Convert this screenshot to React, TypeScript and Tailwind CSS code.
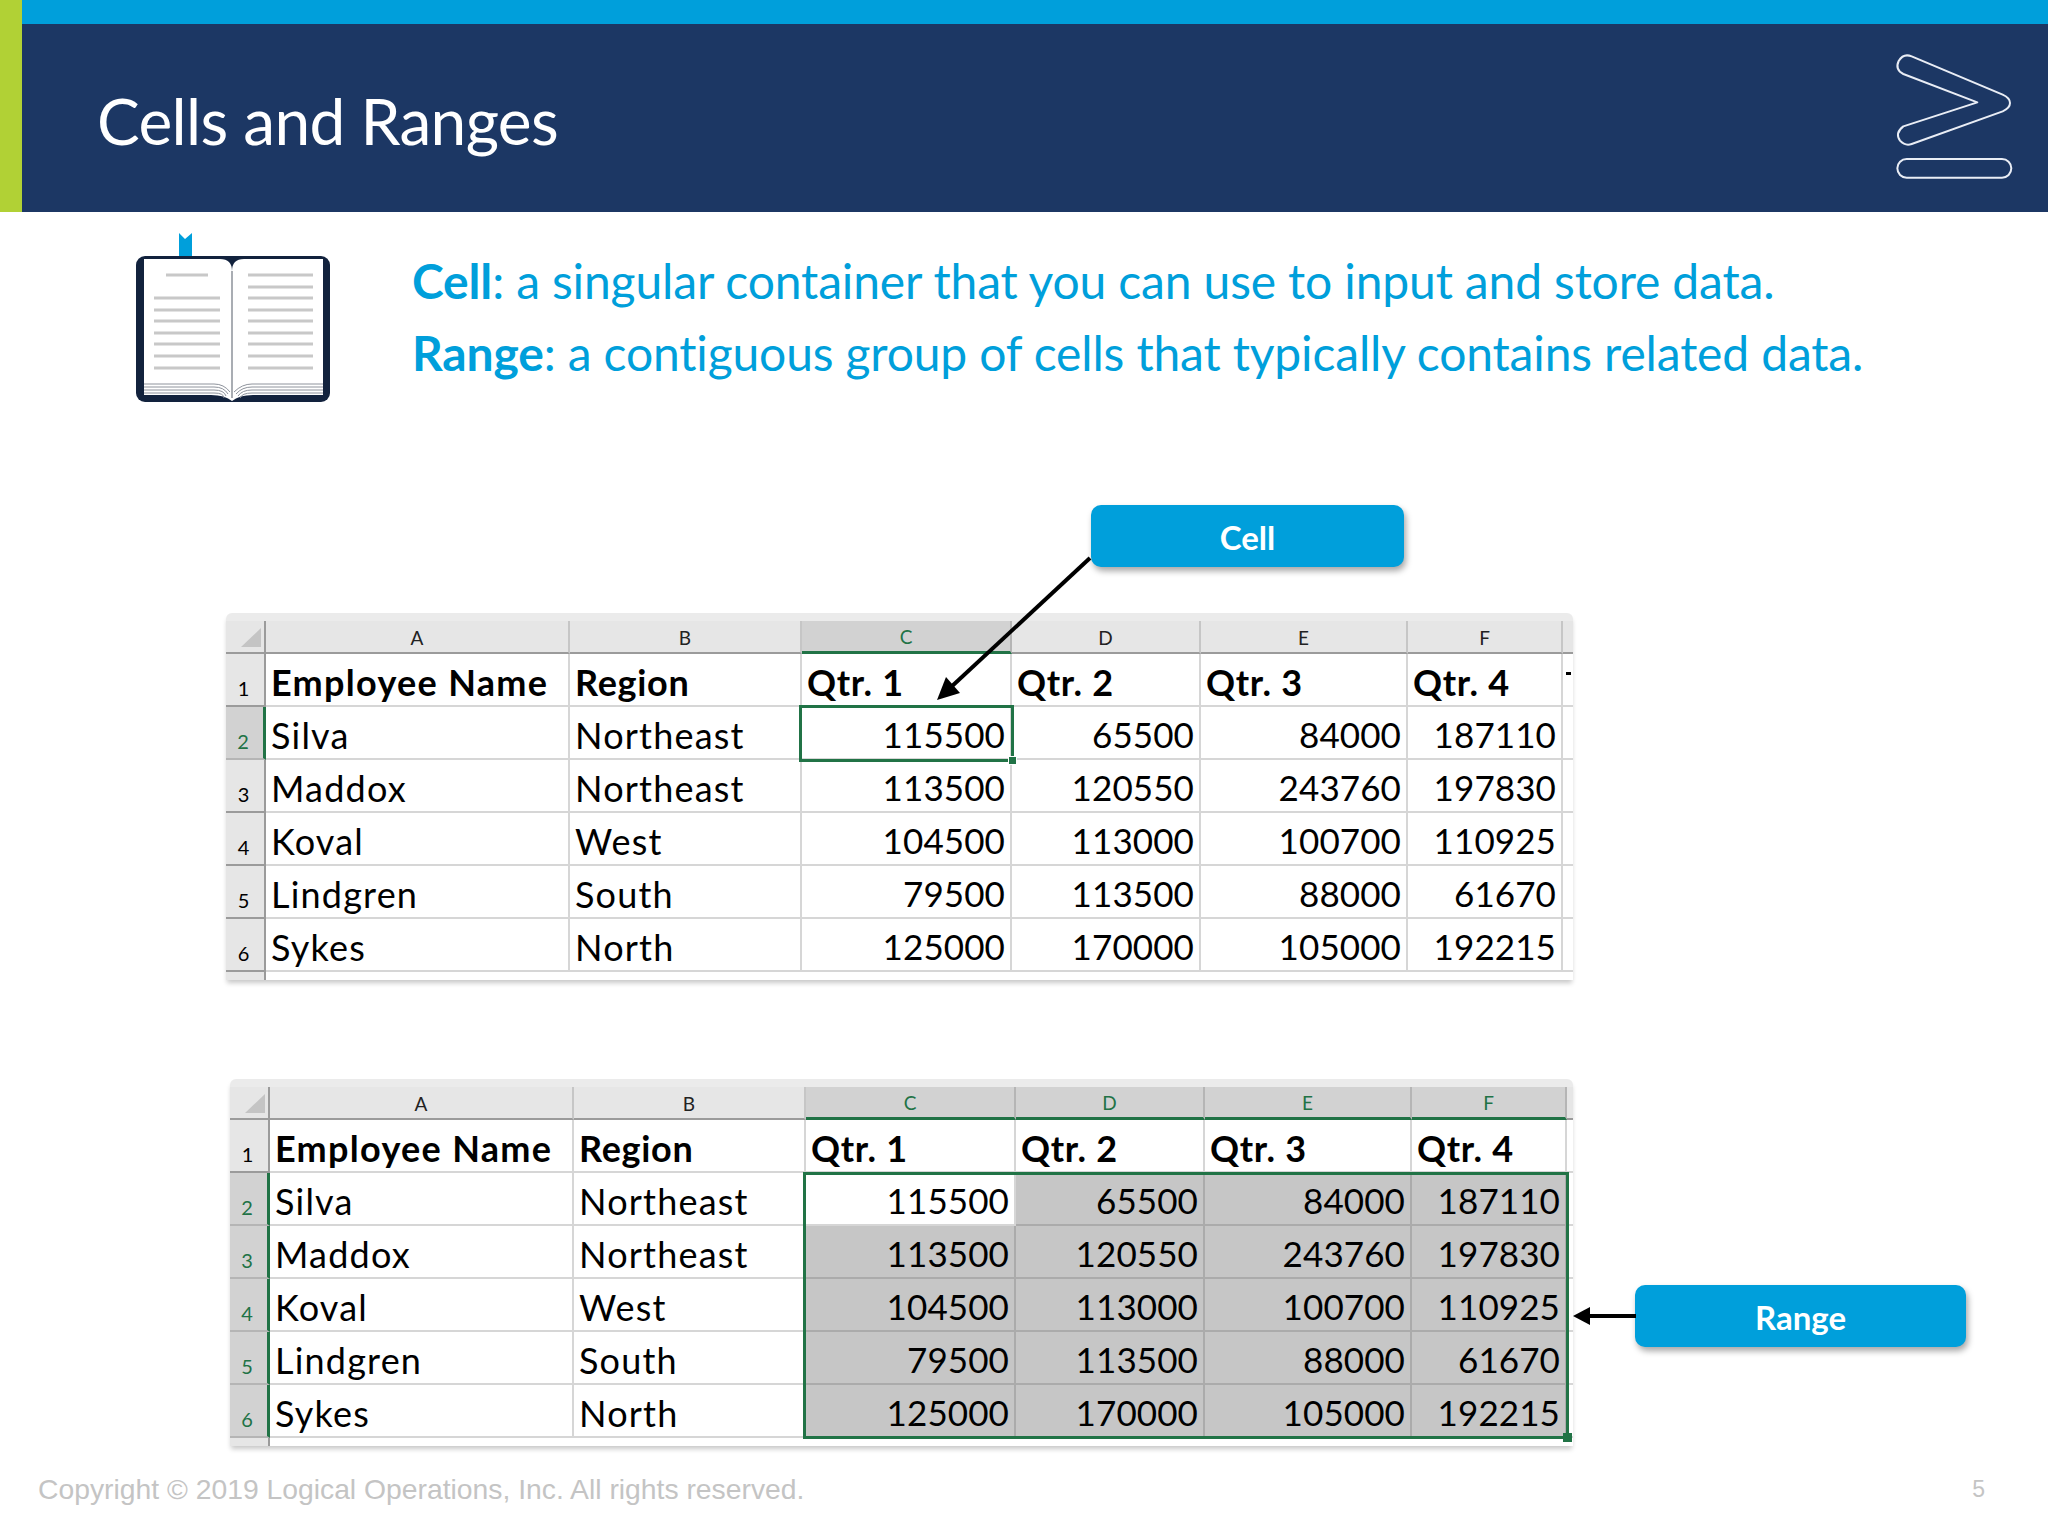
import React from "react";

const rows = [
  ["Silva", "Northeast", "115500", "65500", "84000", "187110"],
  ["Maddox", "Northeast", "113500", "120550", "243760", "197830"],
  ["Koval", "West", "104500", "113000", "100700", "110925"],
  ["Lindgren", "South", "79500", "113500", "88000", "61670"],
  ["Sykes", "North", "125000", "170000", "105000", "192215"],
];
const heads = ["Employee Name", "Region", "Qtr. 1", "Qtr. 2", "Qtr. 3", "Qtr. 4"];
const letters = ["A", "B", "C", "D", "E", "F"];

const BookIcon = () => (
  <svg viewBox="130 230 205 175" className="w-[205px] h-[175px] shrink-0">
    <path d="M179 233l6 6 7-6v28h-13z" fill="#009fdb" />
    <rect x="136" y="256" width="194" height="146" rx="9" fill="#12223d" />
    <path d="M144 259h76q12 0 12 12q0-12 12-12h79v124h-179z" fill="#fff" />
    <path d="M144 383h179v12h-70q-14 0-21 6q-7-6-21-6h-67z" fill="#fff" />
    <path d="M232 271v127" stroke="#a9adb3" strokeWidth="2" />
    {[275, 287, 298, 310, 321, 333, 344, 356, 368].map((y) => (
      <rect key={y} x="248" y={y - 1.5} width="65" height="3" fill="#c8c8c8" />
    ))}
    <rect x="166" y="273.5" width="42" height="3" fill="#c8c8c8" />
    {[298, 310, 321, 333, 344, 356, 368].map((y) => (
      <rect key={y} x="154" y={y - 1.5} width="66" height="3" fill="#c8c8c8" />
    ))}
    {[384, 387, 390, 393].map((y, i) => (
      <g key={y} fill="none" stroke="#8e939c" strokeWidth="1">
        <path d={`M144 ${y}h70q10 0 ${16 - i * 2} ${8 - i}`} />
        <path d={`M323 ${y}h-71q-10 0 ${-18 + i * 2} ${8 - i}`} />
      </g>
    ))}
  </svg>
);

const Logo = () => (
  <svg viewBox="150 150 390 405" className="w-[130px] h-[135px] shrink-0 mb-[3px]" fill="none" stroke="#e9edf5" strokeWidth="6">
    <path d="M215 172L488 287Q510 297 510 312Q510 327 488 337L215 435Q196 442 180 425Q164 402 190 382L412 310L190 225Q164 212 176 186Q190 162 215 172Z" strokeLinejoin="round" />
    <rect x="172" y="480" width="342" height="56" rx="28" />
  </svg>
);

const Sheet = ({ range }: { range?: boolean }) => {
  const colOn = (c: number) => (range ? c >= 2 : c === 2);
  const rowOn = (r: number) => (range ? true : r === 0);
  return (
    <div className={`relative ${range ? "w-[1343px]" : "w-[1347px]"} h-[367px] shrink-0 bg-white rounded-t-[6px] shadow-[0_4px_5px_-1px_rgba(0,0,0,0.22)] font-['Lato',sans-serif] text-black overflow-visible`}>
      <div className="h-[8px] bg-[#ebebeb] rounded-t-[6px]" />
      <div className={`grid ${range ? "grid-cols-[40px_304px_232px_210px_189px_207px_155px_6px]" : "grid-cols-[40px_304px_232px_210px_189px_207px_155px_10px]"} grid-rows-[33px_repeat(5,53px)_53px_8px]`}>
        <div className="bg-[#e6e6e6] border-r-2 border-b-2 border-[#9b9b9b] flex items-end justify-end pr-[3px] pb-[5px]">
          <svg viewBox="0 0 20 19" className="w-[20px] h-[19px]"><path d="M0 19L20 0V19Z" fill="#c4c4c4" /></svg>
        </div>
        {letters.map((l, i) => (
          <div
            key={l}
            className={
              colOn(i)
                ? "bg-[#d2d2d2] border-r-2 border-[#b5b5b5] border-b-[3px] border-b-[#217346] text-[#217346] flex items-center justify-center pt-[3px] text-[19px]"
                : "bg-[#e6e6e6] border-r-2 border-b-2 border-r-[#c6c6c6] border-b-[#9b9b9b] text-[#222] flex items-center justify-center pt-[3px] text-[19px]"
            }
          >
            {l}
          </div>
        ))}
        <div className="bg-[#e6e6e6] border-b-2 border-[#9b9b9b]" />

        <div className="bg-[#e6e6e6] border-r-2 border-b-2 border-[#9b9b9b] flex items-end justify-center pb-[2px] pr-[3px] text-[20px]">1</div>
        {heads.map((h, i) => (
          <div
            key={h}
            className={
              i === 0
                ? "border-r-2 border-b-2 border-[#d6d6d6] pl-[5px] pt-[4px] flex items-center text-[36px] font-bold tracking-[1.3px] whitespace-nowrap"
                : "border-r-2 border-b-2 border-[#d6d6d6] pl-[5px] pt-[4px] flex items-center text-[36px] font-bold tracking-[0.7px] whitespace-nowrap"
            }
          >
            {h}
          </div>
        ))}
        <div className="relative border-b-2 border-[#d6d6d6]">
          {!range && <div className="absolute left-[3px] top-[18px] w-[5px] h-[3px] bg-black" />}
        </div>

        {rows.map((row, r) => (
          <React.Fragment key={row[0]}>
            <div
              className={
                rowOn(r)
                  ? "bg-[#d2d2d2] border-r-[3px] border-r-[#217346] border-b-2 border-b-[#b5b5b5] text-[#217346] flex items-end justify-center pb-[2px] pr-[3px] text-[20px]"
                  : "bg-[#e6e6e6] border-r-2 border-b-2 border-[#9b9b9b] flex items-end justify-center pb-[2px] pr-[3px] text-[20px]"
              }
            >
              {r + 2}
            </div>
            {row.map((v, c) =>
              c < 2 ? (
                <div key={c} className="border-r-2 border-b-2 border-[#d6d6d6] pl-[5px] pt-[4px] flex items-center text-[36px] tracking-[1.2px] whitespace-nowrap">
                  {v}
                </div>
              ) : (
                <div
                  key={c}
                  className={
                    range && !(r === 0 && c === 2)
                      ? "bg-[#c6c6c6] border-r-2 border-b-2 border-[#ababab] pr-[5px] pt-[4px] flex items-center justify-end text-[35px] tracking-[0.1px]"
                      : "border-r-2 border-b-2 border-[#d6d6d6] pr-[5px] pt-[4px] flex items-center justify-end text-[35px] tracking-[0.1px]"
                  }
                >
                  {v}
                </div>
              )
            )}
            <div className="border-b-2 border-[#d6d6d6]" />
          </React.Fragment>
        ))}
        <div className="bg-[#e6e6e6] border-r-2 border-[#9b9b9b]" />
        <div className="col-span-7" />
      </div>
      {range ? (
        <div className="absolute left-[573px] top-[93px] w-[766px] h-[267px] border-[3px] border-[#217346]">
          <div className="absolute right-[-6px] bottom-[-6px] w-[9px] h-[9px] bg-[#217346]" />
        </div>
      ) : (
        <div className="absolute left-[573px] top-[92px] w-[215px] h-[57px] border-[3px] border-[#217346]">
          <div className="absolute right-[-6px] bottom-[-6px] w-[9px] h-[9px] bg-[#217346] border border-white" />
        </div>
      )}
    </div>
  );
};

export default function App() {
  return (
    <div className="relative w-[2048px] h-[1536px] overflow-hidden bg-white font-['Lato',sans-serif]">
      <div className="flex h-[212px]">
        <div className="w-[22px] bg-[#b1d135]" />
        <div className="flex-1 flex flex-col">
          <div className="h-[24px] bg-[#009fdb]" />
          <div className="flex-1 bg-[#1c3764] flex items-center justify-between pl-[75px] pr-[28px]">
            <div className="text-white text-[64px] tracking-[-0.65px] leading-none pt-[6px]">Cells and Ranges</div>
            <Logo />
          </div>
        </div>
      </div>

      <div className="flex mt-[18px] ml-[130px] h-[175px]">
        <BookIcon />
        <div className="ml-[77px] pt-[15px] text-[#009fdb] text-[48px] leading-[72px] tracking-[-0.15px] whitespace-nowrap">
          <div><span className="font-bold">Cell</span>: a singular container that you can use to input and store data.</div>
          <div><span className="font-bold">Range</span>: a contiguous group of cells that typically contains related data.</div>
        </div>
      </div>

      <div className="mt-[100px] ml-[1091px] w-[313px] h-[62px] pt-[3px] rounded-[10px] bg-[#009fdb] shadow-[2px_4px_6px_rgba(0,0,0,0.35)] flex items-center justify-center text-white text-[33px] font-bold">
        Cell
      </div>

      <div className="mt-[46px] ml-[226px]">
        <Sheet />
      </div>

      <div className="mt-[99px] ml-[230px] flex items-start">
        <Sheet range />
        <div className="ml-[62px] mt-[206px] w-[331px] h-[62px] pt-[3px] rounded-[10px] bg-[#009fdb] shadow-[2px_4px_6px_rgba(0,0,0,0.35)] flex items-center justify-center text-white text-[33px] font-bold">
          Range
        </div>
      </div>

      <div className="mt-[22px] pl-[38px] pr-[63px] flex justify-between items-center font-['Liberation_Sans',sans-serif] text-[#c4c4c4]">
        <span className="text-[28.3px]">Copyright © 2019 Logical Operations, Inc. All rights reserved.</span>
        <span className="text-[23px]">5</span>
      </div>

      <svg viewBox="0 0 170 160" className="absolute left-[930px] top-[550px] w-[170px] h-[160px]">
        <line x1="160" y1="8" x2="20" y2="138" stroke="#000" strokeWidth="4" />
        <path d="M7 150L16 127L30 143Z" fill="#000" />
      </svg>
      <svg viewBox="0 0 70 24" className="absolute left-[1570px] top-[1304px] w-[70px] h-[24px]">
        <line x1="66" y1="12" x2="18" y2="12" stroke="#000" strokeWidth="4" />
        <path d="M3 12L20 3V21Z" fill="#000" />
      </svg>
    </div>
  );
}
